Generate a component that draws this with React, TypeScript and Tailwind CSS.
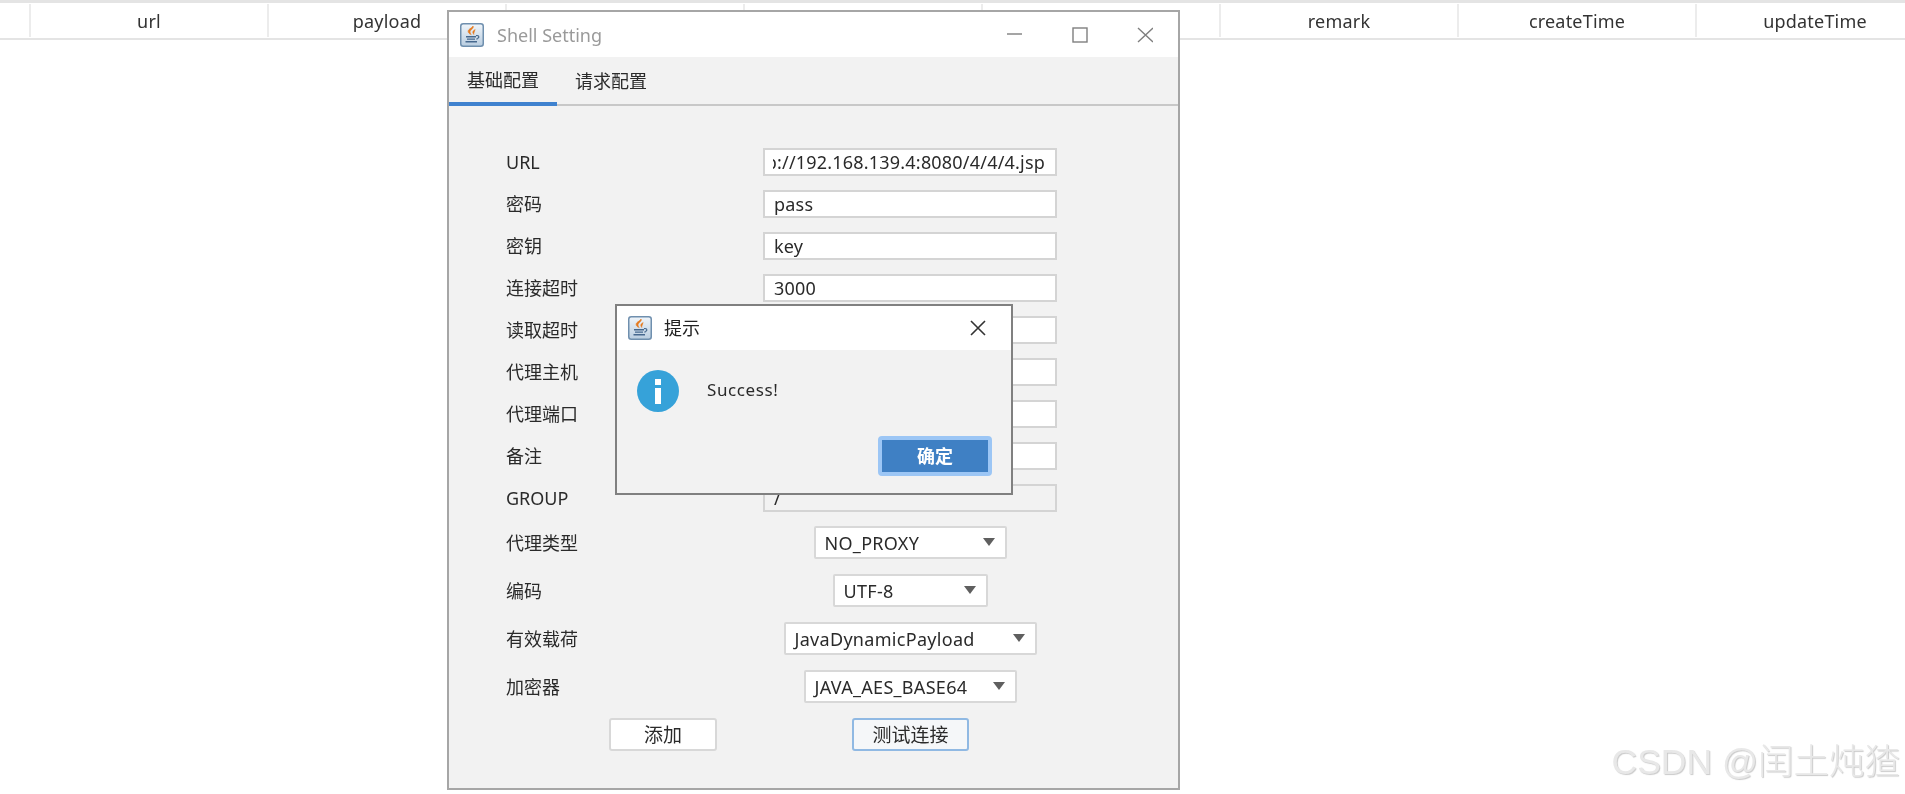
const cjk = "font-['Noto_Sans','Noto_Sans_CJK_SC',sans-serif]";

const columns = ["", "url", "payload", "", "", "", "remark", "createTime", "updateTime"];

const fields = [
  { label: "URL", value: "http://192.168.139.4:8080/4/4/4.jsp", clip: true },
  { label: "密码", value: "pass" },
  { label: "密钥", value: "key" },
  { label: "连接超时", value: "3000" },
  { label: "读取超时", value: "" },
  { label: "代理主机", value: "" },
  { label: "代理端口", value: "" },
  { label: "备注", value: "" },
  { label: "GROUP", value: "/", disabled: true },
];

const combos = [
  { label: "代理类型", value: "NO_PROXY", width: "w-[193px]" },
  { label: "编码", value: "UTF-8", width: "w-[155px]" },
  { label: "有效载荷", value: "JavaDynamicPayload", width: "w-[253px]" },
  { label: "加密器", value: "JAVA_AES_BASE64", width: "w-[213px]" },
];

function JavaIcon() {
  return (
    <svg width="24" height="24" viewBox="0 0 24 24" className="shrink-0">
      <defs>
        <linearGradient id="javaBg" x1="0" y1="0" x2="0" y2="1">
          <stop offset="0" stopColor="#f0f5fa" />
          <stop offset="1" stopColor="#b9cde0" />
        </linearGradient>
      </defs>
      <rect x="0.75" y="0.75" width="22.5" height="22.5" rx="2.5" fill="url(#javaBg)" stroke="#6f8fae" strokeWidth="1.5" />
      <path d="M13 3c1.4 2.4-3 3.8-3 6 0 1 .6 1.8 1.2 2.6-2.6-1-3.8-2.8-2.6-4.6C9.6 5.5 12.4 4.8 13 3z" fill="#e57a1f" stroke="#e57a1f" strokeWidth="0.6" />
      <path d="M15.2 6.4c-1.8 1-2.9 2.1-2.4 3.4.2.7.7 1.2 1 1.8-.2-1.2.5-2 1.4-5.2z" fill="#e57a1f" stroke="#e57a1f" strokeWidth="0.4" />
      <path d="M6 13h10v1.5H6zM7 15.5h8v1.3H7zM5.5 18h11.5v1.5H5.5z" fill="#46688e" />
      <path d="M16 12.6c2.8-.5 3.8 1.2 1.8 2.8l-1.4.9" fill="none" stroke="#46688e" strokeWidth="1.2" />
    </svg>
  );
}

function ComboArrow() {
  return (
    <svg width="12" height="8" viewBox="0 0 12 8" className="absolute right-[10px] top-[10px]">
      <polygon points="0,0 12,0 6,8" fill="#5f5f5f" />
    </svg>
  );
}

function TextRow({ label, value, clip, disabled }: { label: string; value: string; clip?: boolean; disabled?: boolean }) {
  return (
    <div className="grid grid-cols-[257px_294px] items-center">
      <span>{label}</span>
      <div className={`flex h-[28px] items-center border-2 border-[#d4d4d4] ${disabled ? "bg-[#f2f2f2]" : "bg-white"}`}>
        <div className={`flex min-w-0 flex-1 overflow-hidden ${clip ? "ml-[8px] mr-[10px] justify-end" : "mx-[9px]"}`}>
          <span className="whitespace-nowrap tracking-[0.2px]">{value}</span>
        </div>
      </div>
    </div>
  );
}

function ComboRow({ label, value, width }: { label: string; value: string; width: string }) {
  return (
    <div className="grid grid-cols-[257px_294px] items-center">
      <span>{label}</span>
      <div className={`relative mx-auto flex h-[33px] items-center rounded-[2px] border-2 border-[#d8d8d8] bg-white pl-[9px] ${width}`}>
        <span className="whitespace-nowrap tracking-[0.3px]">{value}</span>
        <ComboArrow />
      </div>
    </div>
  );
}

export default function App() {
  return (
    <div className={`relative h-[794px] w-[1905px] overflow-hidden bg-white text-[18px] leading-[24px] text-[#2a2a2a] blur-[0.4px] ${cjk}`}>
      {/* table header behind the windows */}
      <div className="flex h-[40px] border-t-[3px] border-b-2 border-[#e4e4e4] pt-[1px] pb-[1px]">
        {columns.map((name, i) => (
          <div
            key={i}
            className={`flex shrink-0 items-center justify-center border-r-2 border-[#ececec] tracking-[0.2px] text-[#333] ${i === 0 ? "w-[31px]" : "w-[238px]"}`}
          >
            {name}
          </div>
        ))}
      </div>

      {/* Shell Setting window */}
      <div className="absolute left-[447px] top-[10px] flex h-[780px] w-[733px] flex-col border-2 border-[#a6a6a6] bg-[#f2f2f2]">
        <div className="flex h-[45px] shrink-0 items-center bg-white pl-[11px]">
          <JavaIcon />
          <span className="ml-[13px] text-[#9a9a9a]">Shell Setting</span>
          <svg width="160" height="16" viewBox="0 0 160 16" className="ml-auto mr-[25px]" fill="none" stroke="#7f7f7f" strokeWidth="1.4">
            <path d="M14 7h15" />
            <rect x="80" y="1" width="14" height="14" />
            <path d="M145 1l15 14M160 1l-15 14" />
          </svg>
        </div>

        <div className="flex h-[49px] shrink-0 border-b-2 border-[#c8c8c8]">
          <div className="-mb-[2px] flex w-[108px] items-center justify-center border-b-[4px] border-[#3f82cf]">基础配置</div>
          <div className="flex w-[108px] items-center justify-center">请求配置</div>
        </div>

        <div className="flex flex-col pl-[57px] pt-[42px]">
          <div className="flex flex-col gap-[14px]">
            {fields.map((f) => (
              <TextRow key={f.label} {...f} />
            ))}
          </div>
          <div className="mt-[14px] flex flex-col gap-[15px]">
            {combos.map((c) => (
              <ComboRow key={c.label} {...c} />
            ))}
          </div>
          <div className="mt-[15px] flex">
            <button className="ml-[103px] h-[33px] w-[108px] rounded-[3px] border-2 border-[#d8d8d8] bg-white text-[19px]">添加</button>
            <button className="ml-[135px] h-[33px] w-[117px] rounded-[3px] border-2 border-[#90b9e3] bg-[#f5f7f9] text-[19px]">测试连接</button>
          </div>
        </div>
      </div>

      {/* message dialog */}
      <div className="absolute left-[615px] top-[304px] flex h-[191px] w-[398px] flex-col border-2 border-[#808080] bg-[#f2f2f2]">
        <div className="flex h-[44px] shrink-0 items-center bg-white pl-[11px]">
          <JavaIcon />
          <span className="ml-[12px] text-[#222]">提示</span>
          <svg width="16" height="16" viewBox="0 0 16 16" className="ml-auto mr-[25px]" fill="none" stroke="#333" strokeWidth="1.6">
            <path d="M1 1l14 14M15 1L1 15" />
          </svg>
        </div>
        <div className="flex items-center pl-[20px] pt-[20px]">
          <div className="flex h-[42px] w-[42px] shrink-0 flex-col items-center justify-center gap-[3px] rounded-full bg-[#36a2d9]">
            <div className="h-[6px] w-[6px] bg-white" />
            <div className="h-[16px] w-[6px] bg-white" />
          </div>
          <span className="ml-[28px] -mt-[3px] text-[17px] tracking-[0.6px]">Success!</span>
        </div>
        <div className="mr-[19px] mt-auto mb-[17px] flex justify-end">
          <button className="h-[40px] w-[114px] rounded-[4px] border-[4px] border-[#9cc6f5] bg-[#3f80c4] text-[18px] font-semibold text-white">确定</button>
        </div>
      </div>

      {/* watermark */}
      <div className="absolute right-[5px] top-[740px] whitespace-nowrap font-['Liberation_Sans','Noto_Sans_CJK_SC',sans-serif] text-[35.5px] font-light leading-[44px] text-[#e8e8e8] [text-shadow:1px_1px_1px_#cacaca]">
        CSDN @闰土炖猹
      </div>
    </div>
  );
}
